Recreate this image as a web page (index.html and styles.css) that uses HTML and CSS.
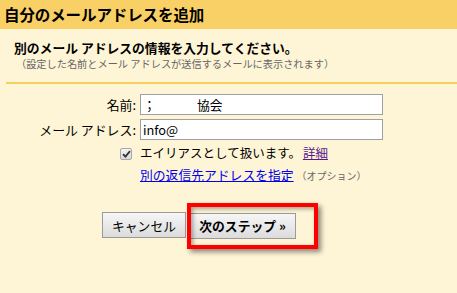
FILE: index.html
```html
<!DOCTYPE html>
<html lang="ja">
<head>
<meta charset="utf-8">
<link rel="stylesheet" href="styles.css">
</head>
<body>
<div class="header"><h1 class="title">自分のメールアドレスを追加</h1></div>
<div class="intro">
  <p class="lead">別のメール アドレスの情報を入力してください。</p>
  <p class="note">（設定した名前とメール アドレスが送信するメールに表示されます）</p>
</div>
<div class="sep"></div>
<div class="form">
  <label class="lbl">名前:</label>
  <div class="field"><input class="inp" type="text" value="；　　　 協会"></div>
  <label class="lbl">メール アドレス:</label>
  <div class="field"><input class="inp" type="text" value="info@"></div>
  <div class="cbcell"><span class="cb"><svg width="9" height="8" viewBox="0 0 9 8"><path d="M1 4.2 L3.4 6.6 L8 1.2" fill="none" stroke="#333" stroke-width="1.8"/></svg></span></div>
  <div class="opt">エイリアスとして扱います。<a class="more" href="#">詳細</a></div>
  <div></div>
  <div class="opt2"><a class="reply" href="#">別の返信先アドレスを指定</a><span class="optnote">（オプション）</span></div>
</div>
<div class="buttons">
  <button class="btn cancel">キャンセル</button>
  <span class="hl">
    <button class="btn next">次のステップ »</button>
    <span class="mark"></span>
  </span>
</div>
</body>
</html>
```
FILE: styles.css
```css
html, body {
  margin: 0;
  padding: 0;
}
body {
  background: #fef5d6;
  font-family: "Noto Sans CJK JP", "Noto Sans", sans-serif;
  color: #000;
  width: 457px;
  height: 293px;
  overflow: hidden;
}
.header {
  background: #f9d066;
  height: 29px;
  padding-left: 4px;
  display: flex;
  align-items: center;
}
.title {
  margin: 0;
  font-size: 15.5px;
  font-weight: bold;
  line-height: 1;
  letter-spacing: -0.1px;
}
.intro {
  padding: 10px 0 0 14px;
}
.lead {
  margin: 0;
  font-size: 12.8px;
  font-weight: bold;
  line-height: 17px;
}
.note {
  margin: 1px 0 0 2px;
  font-size: 10.2px;
  color: #666;
  line-height: 13px;
}
.sep {
  margin: 12px 0 0 6px;
  height: 2px;
  background: #f8ce5f;
}
.form {
  display: grid;
  grid-template-columns: 136px 243px;
  column-gap: 4px;
  row-gap: 4px;
  padding-top: 10px;
  align-items: center;
}
.lbl {
  text-align: right;
  font-size: 12.9px;
  line-height: 21px;
}
.inp {
  box-sizing: border-box;
  width: 243px;
  height: 21px;
  border: 1px solid #a0a0a0;
  background: #fff;
  padding: 0 2px;
  margin: 0;
  font-family: "Noto Sans CJK JP", "Noto Sans", sans-serif;
  font-size: 12.8px;
  display: block;
}
.cbcell {
  display: flex;
  justify-content: flex-end;
  padding-right: 4px;
  margin-top: 1px;
}
.cb {
  box-sizing: border-box;
  width: 12px;
  height: 12px;
  border: 1px solid #a6a6a6;
  border-radius: 2px;
  background: linear-gradient(#f4f4f4, #d8d8d8);
  display: flex;
  align-items: center;
  justify-content: center;
}
.opt {
  font-size: 12.5px;
  line-height: 18px;
  margin-top: 0;
}
.more {
  color: #551a8b;
  margin-left: 2px;
}
.opt2 {
  font-size: 12.8px;
  line-height: 18px;
  margin-top: 0;
}
.reply {
  color: #0000ee;
}
.optnote {
  font-size: 10px;
  color: #666;
  margin-left: 3px;
}
.buttons {
  display: flex;
  align-items: center;
  gap: 3px;
  padding: 27px 0 0 102px;
}
.btn {
  box-sizing: border-box;
  height: 26px;
  padding: 0 8px;
  border: 1px solid #9a9a9a;
  background: linear-gradient(#f6f6f6, #dcdcdc);
  font-family: "Noto Sans CJK JP", "Noto Sans", sans-serif;
  font-size: 12.8px;
  color: #000;
  border-radius: 0;
  margin: 0;
}
.cancel {
  width: 84px;
  padding: 0;
}
.next {
  font-weight: bold;
  width: 107px;
  padding: 0 4px;
}
.hl {
  position: relative;
  display: block;
}
.mark {
  position: absolute;
  left: -2px;
  top: -9px;
  width: 131px;
  height: 46px;
  box-sizing: border-box;
  border: 4px solid #ff0000;
  box-shadow: 3px 3px 5px rgba(0, 0, 0, 0.45), inset 2px 2px 4px rgba(0, 0, 0, 0.35);
}
```
